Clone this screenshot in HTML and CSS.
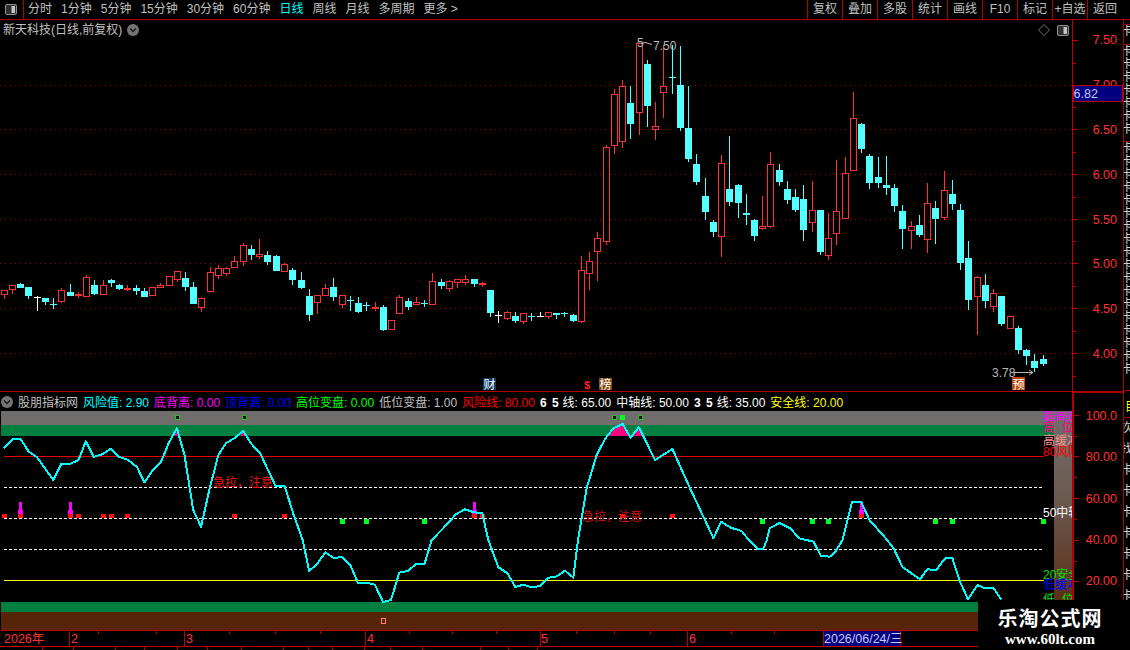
FILE: index.html
```html
<!DOCTYPE html>
<html lang="zh-CN">
<head>
<meta charset="utf-8">
<title>新天科技 日线</title>
<link rel="stylesheet" href="styles.css">
</head>
<body>
<div class="page">
  <header class="toolbar">
    <div class="toggle-box">
      <svg class="toggle" viewBox="0 0 12 11"><rect x=".5" y=".5" width="11" height="10" rx="1.5" class="toggle-frame"/><rect x="6.5" y="2" width="3.5" height="7" class="toggle-fill"/></svg>
    </div>
    <nav class="periods">
      <span>分时</span><span>1分钟</span><span>5分钟</span><span>15分钟</span><span>30分钟</span><span>60分钟</span><span class="active">日线</span><span>周线</span><span>月线</span><span>多周期</span><span>更多&nbsp;&gt;</span>
    </nav>
    <nav class="tools">
      <span>复权</span><span>叠加</span><span>多股</span><span>统计</span><span>画线</span><span>F10</span><span>标记</span><span>+自选</span><span>返回</span>
    </nav>
  </header>

  <div class="body-row">
    <div class="charts">
      <section class="price-row">
        <div class="price-chart">
          <svg id="price" class="chart-svg" width="1072" height="371" viewBox="0 20 1072 371">
            <path class="grid" d="M0 85.5H1072M0 129.5H1072M0 174.5H1072M0 219.5H1072M0 263.5H1072M0 308.5H1072M0 353.5H1072"/>
            <g id="candles"></g>
            <text x="653" y="50" class="note">7.50</text>
            <text x="637" y="47" class="note">5</text>
            <path class="note-line" d="M641 43.5l4-1 7 2"/>
            <text x="992" y="377" class="note">3.78</text>
            <path class="note-line" d="M1014 372.500H1033M1029 370l4 2.500-4 2.500"/>
            <rect x="483" y="378" width="13" height="12" class="tag-cai"/><text x="483.500" y="389" class="tag-text">财</text>
            <text x="584" y="389" class="tag-s">$</text>
            <rect x="599" y="378" width="13" height="12" class="tag-bang"/><text x="599.500" y="389" class="tag-text">榜</text>
            <rect x="1012" y="377" width="13" height="13" class="tag-yu"/><text x="1012.500" y="388.500" class="tag-text">预</text>
          </svg>
          <div class="stock-title">新天科技(日线,前复权)
            <svg class="circle-btn" viewBox="0 0 12 12"><circle cx="6" cy="6" r="6" class="circle-fill"/><path class="circle-chevron" d="M3 4.500l3 3 3-3"/></svg>
          </div>
          <div class="corner-tools">
            <svg class="diamond" viewBox="0 0 12 12"><path d="M6 .5L11.500 6 6 11.500.5 6z"/></svg>
            <svg class="toggle" viewBox="0 0 12 11"><rect x=".5" y=".5" width="11" height="10" rx="1.5" class="toggle-frame"/><rect x="6.500" y="2" width="3.500" height="7" class="toggle-fill"/></svg>
          </div>
        </div>
      </section>

      <section class="indicator">
        <div class="legend">
          <svg class="circle-btn" viewBox="0 0 12 12"><circle cx="6" cy="6" r="6" class="circle-fill"/><path class="circle-chevron" d="M3 4.500l3 3 3-3"/></svg>
          <span class="c-grey">股朋指标网</span>
          <span class="c-cyan">风险值: 2.90</span>
          <span class="c-magenta">底背离: 0.00</span>
          <span class="c-blue">顶背离: 0.00</span>
          <span class="c-green">高位变盘: 0.00</span>
          <span class="c-grey">低位变盘: 1.00</span>
          <span class="c-red">风险线: 80.00</span>
          <span class="c-white"><b>6 5</b>线: 65.00</span>
          <span class="c-white">中轴线: 50.00</span>
          <span class="c-white"><b>3 5</b>线: 35.00</span>
          <span class="c-yellow">安全线: 20.00</span>
        </div>
        <svg id="indicator" class="chart-svg" width="1072" height="219" viewBox="0 411 1072 219">
          <defs>
            <linearGradient id="fade" x1="0" y1="0" x2="0" y2="1"><stop offset="0" stop-color="#706e6c"/><stop offset=".45" stop-color="#6c5a50"/><stop offset="1" stop-color="#5c3018"/></linearGradient>
          </defs>
          <rect x="1" y="411" width="1053" height="14" class="band-grey"/>
          <rect x="1" y="425" width="1053" height="11" class="band-green"/>
          <rect x="1" y="602" width="1053" height="10" class="band-green"/>
          <rect x="1" y="612" width="1053" height="18" class="band-brown"/>
          <rect x="1054" y="411" width="18" height="189" fill="url(#fade)"/>
          <rect x="4" y="456" width="1040" height="1" class="l-red"/>
          <path class="l-dash" d="M4 487.500H1044M4 518.500H1044M4 549.500H1044"/>
          <rect x="4" y="580" width="1040" height="1" class="l-yellow"/>
          <g id="marks"></g>
          <text x="213" y="487" class="warn">急拉，注意</text>
          <text x="582" y="521" class="warn dim">急拉，注意</text>
          <g id="curve"></g>
          <rect x="381.500" y="618.500" width="4" height="5" class="mini-square"/>
          <text x="1043" y="420" class="side s-magenta">超高抛</text>
          <text x="1043" y="432" class="side s-pink">高&nbsp;&nbsp;位</text>
          <text x="1043" y="445" class="side s-salmon">高缓冲</text>
          <text x="1043" y="456" class="side s-red">80风险</text>
          <text x="1043" y="517" class="side s-white">50中轴</text>
          <text x="1043" y="579" class="side s-green">20安全</text>
          <text x="1043" y="589" class="side s-blue">低缓冲</text>
          <text x="1043" y="604" class="side s-green">低&nbsp;&nbsp;位</text>
        </svg>
      </section>
    </div>

    <aside class="axis">
      <svg class="axis-price" width="51" height="371" viewBox="1072 20 51 371">
        <path class="axis-tick" d="M1073 40.500h5M1073 63.500h3M1073 107.500h3M1073 129.500h5M1073 152.500h3M1073 174.500h5M1073 197.500h3M1073 219.500h5M1073 241.500h3M1073 263.500h5M1073 286.500h3M1073 308.500h5M1073 331.500h3M1073 353.500h5M1073 376.500h3"/>
        <text x="1117" y="44" class="axis-label">7.50</text>
        <text x="1117" y="89" class="axis-label">7.00</text>
        <text x="1117" y="134" class="axis-label">6.50</text>
        <text x="1117" y="179" class="axis-label">6.00</text>
        <text x="1117" y="224" class="axis-label">5.50</text>
        <text x="1117" y="268" class="axis-label">5.00</text>
        <text x="1117" y="313" class="axis-label">4.50</text>
        <text x="1117" y="358" class="axis-label">4.00</text>
        <rect x="1073" y="85.500" width="49.500" height="16" class="price-tag"/>
        <text x="1073.500" y="98" class="price-text">6.82</text>
      </svg>
      <svg class="axis-ind" width="51" height="209" viewBox="1072 391 51 209">
        <path class="axis-frame" d="M1072 392H1123M1073 391V600"/>
        <path class="axis-tick" d="M1074 415.500h5M1074 436.500h3M1074 456.500h5M1074 477.500h3M1074 498.500h5M1074 519.500h3M1074 540.500h5M1074 561.500h3M1074 581.500h5"/>
        <text x="1117" y="420" class="axis-label">100.0</text>
        <text x="1117" y="461" class="axis-label">80.00</text>
        <text x="1117" y="503" class="axis-label">60.00</text>
        <text x="1117" y="544" class="axis-label">40.00</text>
        <text x="1117" y="585" class="axis-label">20.00</text>
      </svg>
    </aside>

    <aside class="strip">
      <div class="strip-sec s1"></div>
      <div class="strip-sec s2"><p>卡</p></div>
      <div class="strip-sec s3"><p>卡</p><p>卡</p><p>卡</p><p>卡</p><p>卡</p><p>卡</p><p>卡</p></div>
      <div class="strip-sec s3b"><p>卡</p><p>卡</p><p>卡</p><p>卡</p><p>卡</p><p>卡</p><p>卡</p><p>卡</p><p>卡</p><p>卡</p><p>卡</p><p>卡</p><p>卡</p><p>卡</p><p>卡</p><p>卡</p><p>卡</p><p>卡</p></div>
      <div class="strip-sec s4"><p class="box">目</p></div>
      <div class="strip-sec s5"><p>次</p><p>找</p><p>卡</p><p>卡</p><p>卡</p><p>卡</p><p>卡</p><p>卡</p><p>卡</p><p>卡</p></div>
    </aside>
  </div>

  <footer class="date-row">
    <svg width="1130" height="20" viewBox="0 630 1130 20">
      <path class="date-line" d="M0 630.500H1130M0 646.500H1130M69.500 630V646M184.500 630V646M365.500 630V646M540.500 630V646M687.500 630V646"/>
      <path class="date-line" d="M98.500 631v3M156.500 631v3M229.500 631v3M275.500 631v3M320.500 631v3M409.500 631v3M452.500 631v3M496.500 631v3M576.500 631v3M614.500 631v3M650.500 631v3M731.500 631v3M774.500 631v3"/>
      <path class="date-line" d="M42.500 646v4M73.500 646v4M115.500 646v4M144.500 646v4M177.500 646v4M207.500 646v4M241.500 646v4M283.500 646v4M308.500 646v4M332.500 646v4M364.500 646v4M390.500 646v4M422.500 646v4M480.500 646v4M508.500 646v4M537.500 646v4"/>
      <text x="4" y="643" class="date-label">2026年</text>
      <text x="71" y="643" class="date-label">2</text>
      <text x="186" y="643" class="date-label">3</text>
      <text x="367" y="643" class="date-label">4</text>
      <text x="541" y="643" class="date-label">5</text>
      <text x="689" y="643" class="date-label">6</text>
      <rect x="823" y="630.500" width="77.500" height="15.500" class="date-tag"/>
      <text x="824" y="643" class="date-text">2026/06/24/三</text>
    </svg>
  </footer>

  <div class="watermark">
    <div class="wm-title">乐淘公式网</div>
    <div class="wm-url">www.60lt.com</div>
  </div>
</div>
<script src="chart.js"></script>
</body>
</html>
```

FILE: styles.css
```css
* { box-sizing: border-box; }
html, body { margin: 0; padding: 0; background: #000; }
body { width: 1130px; height: 650px; overflow: hidden; font-family: "Liberation Sans", "Noto Sans CJK SC", sans-serif; font-size: 12px; color: #c0c0c0; }
svg { display: block; }
text { font-family: "Liberation Sans", "Noto Sans CJK SC", sans-serif; font-size: 12px; }
.page { position: relative; width: 1130px; height: 650px; display: flex; flex-direction: column; background: #000; }

.toolbar { display: flex; height: 20px; flex: none; border-bottom: 1px solid #b00000; line-height: 18px; }
.toggle-box { width: 24px; display: flex; align-items: center; justify-content: center; border-right: 1px solid #b00000; padding-right: 1px; }
.toggle { width: 12px; height: 11px; flex: none; }
.toggle-frame { fill: #303030; stroke: #909090; }
.toggle-fill { fill: #c4c4c4; }
.periods { display: flex; gap: 9px; padding-left: 4px; flex: 1; }
.periods span { white-space: nowrap; }
.periods .active { color: #00ffff; }
.tools { display: flex; width: 323px; }
.tools span { width: 35px; border-left: 1px solid #b00000; text-align: center; white-space: nowrap; }
.tools span:last-child { width: 43px; padding-right: 8px; }

.body-row { display: flex; height: 610px; flex: none; }
.charts { width: 1072px; flex: none; display: flex; flex-direction: column; }
.price-row { height: 372px; flex: none; border-bottom: 1px solid #b00000; }
.price-chart { position: relative; height: 371px; }
.chart-svg { shape-rendering: crispEdges; flex: none; }
.chart-svg text { shape-rendering: auto; }
.stock-title { position: absolute; left: 3px; top: 1px; display: flex; align-items: center; gap: 5px; line-height: 18px; white-space: nowrap; }
.circle-btn { width: 12px; height: 12px; flex: none; }
.circle-fill { fill: #757575; }
.circle-chevron { fill: none; stroke: #1c1c1c; stroke-width: 1.5; }
.corner-tools { position: absolute; right: 3px; top: 4px; display: flex; align-items: center; gap: 7px; }
.diamond { width: 12px; height: 12px; }
.diamond path { fill: none; stroke: #707070; }

.grid { stroke: #a00000; stroke-dasharray: 1 4; fill: none; }
.note { fill: #b8b8b8; }
.note-line { stroke: #b8b8b8; fill: none; shape-rendering: auto; }
.tag-text { fill: #fff; font-size: 12px; }
.tag-cai { fill: #103a66; }
.tag-bang { fill: #8a4a10; }
.tag-yu { fill: #b84a10; }
.tag-s { fill: #ff2020; font-weight: 700; font-size: 11px; }

.indicator { display: flex; flex-direction: column; }
.legend { height: 19px; flex: none; display: flex; align-items: center; gap: 5px; padding-left: 1px; white-space: nowrap; }
.legend b { font-weight: 700; letter-spacing: 1px; margin-right: 3px; }
.c-grey { color: #c0c0c0; }
.c-cyan { color: #00ffff; }
.c-magenta { color: #ff00ff; }
.c-blue { color: #0000ff; }
.c-green { color: #00ff00; }
.c-red { color: #ff0000; }
.c-white { color: #fff; }
.c-yellow { color: #ffff00; }

.band-grey { fill: #706e6c; }
.band-green { fill: #008040; }
.band-brown { fill: #582408; }
.mini-square { fill: #582408; stroke: #ff8080; }
.l-red { fill: #e80000; }
.l-dash { stroke: #fff; stroke-dasharray: 3 2; fill: none; }
.l-yellow { fill: #ffff00; }
.warn { fill: #ff1010; font-size: 12px; }
.warn.dim { fill: #d01010; }
.side { font-size: 12px; }
.s-magenta { fill: #ff00ff; }
.s-pink { fill: #ff0080; }
.s-salmon { fill: #ff9090; }
.s-red { fill: #ff0000; }
.s-white { fill: #fff; }
.s-green { fill: #00e000; }
.s-blue { fill: #0000ff; }
.curve { fill: none; stroke: #00ffff; stroke-width: 2; shape-rendering: crispEdges; stroke-linejoin: round; }
.peak { fill: #ff0080; shape-rendering: auto; }

.axis { width: 51px; flex: none; border-left: 1px solid #c00000; display: flex; flex-direction: column; }
.axis-price { margin-left: -1px; flex: none; }
.axis-ind { margin-left: -1px; flex: none; }
.axis-frame { stroke: #b00000; stroke-width: 2; fill: none; shape-rendering: crispEdges; }
.axis-tick { stroke: #c00000; fill: none; shape-rendering: crispEdges; }
.axis-label { fill: #ff3232; text-anchor: end; font-size: 12.5px; }
.price-tag { fill: #000080; stroke: #c00000; shape-rendering: crispEdges; }
.price-text { fill: #c8c8ff; font-size: 12.5px; }

.strip { width: 7px; flex: none; border-left: 1px solid #b00000; overflow: hidden; display: flex; flex-direction: column; color: #d0d0d0; }
.strip-sec { overflow: hidden; border-bottom: 1px solid #b00000; padding-left: 1px; flex: none; }
.strip-sec p { margin: 0 0 0 -4px; line-height: 13px; white-space: nowrap; }
.s1 { height: 5px; }
.s2 { height: 20px; }
.s3 { height: 97px; }
.s3b { height: 249px; }
.s4 { height: 27px; }
.s4 .box { color: #ffff00; padding-top: 10px; margin-left: 0; }
.s5 { height: 212px; border-bottom: 0; }
.s5 p { line-height: 21px; }

.date-row { height: 20px; flex: none; }
.date-line { stroke: #c00000; fill: none; shape-rendering: crispEdges; }
.date-label { fill: #ff3232; font-size: 12.5px; }
.date-tag { fill: #000080; stroke: #c00000; shape-rendering: crispEdges; }
.date-text { fill: #c8c8ff; font-size: 12.5px; }

.watermark { position: absolute; left: 978px; top: 600px; width: 152px; height: 50px; background: #000; color: #fff; display: flex; flex-direction: column; align-items: center; padding: 6px 8px 0 0; }
.wm-title { font-size: 20px; font-weight: 700; line-height: 26px; letter-spacing: 1px; white-space: nowrap; }
.wm-url { font-family: "Liberation Serif", serif; font-size: 15px; font-weight: 700; line-height: 15px; white-space: nowrap; }
```

FILE: chart.js
```js
var NS = "http://www.w3.org/2000/svg";
function el(parent, name, attrs) {
  var n = document.createElementNS(NS, name);
  for (var k in attrs) n.setAttribute(k, attrs[k]);
  parent.appendChild(n);
  return n;
}
// candle readings: [x, high, top, bottom, low, kind]  r hollow red, R solid red, c cyan, w white
var groups = [
  { x0: 0, y0: 230, rows: [
    [13,181,181,194,207,"r"],[37,166,166,179,191,"r"],[61,159,163,174,174,"c"],[85,171,171,198,207,"c"],
    [112,198,201,203,243,"w"],[136,204,204,216,225,"c"],[160,204,222,224,237,"c"],[184,175,181,215,218,"r"],
    [211,162,186,198,198,"c"],[235,186,193,197,204,"R"],[259,135,142,200,200,"r"],[283,150,165,192,195,"c"],
    [310,150,166,194,194,"r"],[334,147,150,159,171,"c"],[358,162,165,177,180,"c"],[382,165,174,179,183,"R"],
    [409,165,174,183,195,"c"],[433,174,183,201,201,"c"],[457,172,172,197,197,"r"],[481,159,166,173,173,"r"],
    [508,139,139,167,167,"r"],[532,124,124,149,156,"r"],[556,126,144,171,183,"c"],[580,156,171,222,222,"c"],
    [604,202,205,233,246,"r"],[631,111,127,185,185,"r"],[655,105,115,137,147,"r"],[679,111,115,131,138,"r"],
    [703,78,94,113,113,"r"],[730,39,46,95,108,"r"],[754,45,57,75,90,"c"],[778,27,73,82,87,"r"],
    [802,63,75,96,105,"c"],[829,75,78,123,123,"c"],[853,99,103,125,125,"r"],[877,114,120,150,165,"c"],
    [903,126,150,174,177,"c"]
  ]},
  { x0: 300, y0: 230, rows: [
    [28,177,198,255,273,"c"],[52,196,196,218,252,"r"],[76,162,175,197,197,"r"],[100,144,171,201,213,"c"],
    [127,196,196,224,234,"r"],[151,198,210,212,243,"c"],[175,201,220,246,249,"c"],[198,216,225,227,243,"c"],
    [226,216,232,236,243,"R"],[250,225,231,300,303,"c"],[274,271,271,299,299,"r"],[298,195,202,251,251,"r"],
    [325,204,213,231,240,"c"],[349,201,217,224,224,"r"],[373,210,219,221,231,"c"],[397,129,154,224,224,"r"],
    [424,147,156,168,177,"c"],[448,150,154,177,186,"r"],[472,148,148,158,174,"r"],[496,135,148,158,165,"r"],
    [523,147,147,162,171,"c"],[547,155,159,164,171,"R"],[571,180,180,249,261,"c"],[595,243,255,257,279,"w"],
    [622,243,247,266,270,"r"],[646,246,258,273,279,"c"],[670,250,250,275,282,"r"],[694,249,257,259,273,"c"],
    [720,246,258,260,261,"w"],[745,247,247,260,267,"r"],[769,250,250,255,267,"c"],[793,246,249,252,261,"c"],
    [820,252,255,273,276,"c"],[844,78,121,275,279,"r"],[868,66,94,131,180,"r"],[892,6,25,65,153,"r"]
  ]},
  { x0: 600, y0: 40, rows: [
    [19,316,322,605,615,"r"],[43,147,163,317,342,"r"],[67,120,139,305,324,"r"],[91,138,189,252,297,"c"],
    [118,10,10,218,285,"r"],[142,60,72,198,261,"c"],[166,186,259,269,300,"r"],[190,15,139,158,234,"r"],
    [217,15,111,113,162,"c"],[241,18,135,264,273,"c"],[265,138,264,357,366,"c"],[289,342,372,426,435,"c"],
    [316,414,468,516,540,"c"],[340,540,546,576,591,"c"],[364,345,370,590,651,"r"],[388,288,447,486,498,"c"],
    [415,432,435,489,534,"c"],[439,462,519,524,555,"c"],[463,537,540,588,603,"c"],[487,468,559,566,570,"r"],
    [511,336,373,560,564,"r"],[538,372,390,426,438,"c"],[562,423,447,480,492,"c"],[586,447,471,510,516,"c"],
    [610,435,477,570,603,"c"],[637,423,511,548,576,"r"],[661,510,510,636,645,"c"],[685,519,595,647,660,"r"],
    [709,360,514,581,615,"r"]
  ]},
  { x0: 830, y0: 90, rows: [
    [46,201,250,388,388,"r"],[70,6,85,244,244,"r"],[94,99,102,177,189,"c"],[118,192,198,279,297,"c"],
    [145,201,261,279,294,"c"],[169,198,285,294,315,"c"],[193,282,294,348,366,"c"],[217,345,363,417,477,"c"],
    [244,393,409,422,477,"r"],[268,375,405,435,441,"c"],[292,279,340,449,489,"r"],[316,333,354,387,462,"c"],
    [343,243,301,384,390,"r"],[367,270,312,342,360,"c"],[391,342,360,519,540,"c"],[415,453,504,630,660,"c"],
    [442,558,562,620,735,"r"],[466,552,585,633,654,"c"],[490,597,610,651,666,"r"],[514,618,618,702,708,"c"],
    [541,679,679,717,717,"r"],[565,708,714,780,792,"c"],[589,777,780,798,825,"c"],[613,792,813,834,846,"c"],
    [640,795,807,822,828,"c"]
  ]}
];
var colors = { r: "#ff3232", R: "#ff3232", c: "#54ffff", w: "#ffffff" };
var candleLayer = document.getElementById("candles");
groups.forEach(function (g) {
  g.rows.forEach(function (c) {
    var x = Math.floor(g.x0 + c[0] / 3);
    var y = function (v) { return Math.round(g.y0 + v / 3); };
    var hi = y(c[1]), top = y(c[2]), bot = y(c[3]), lo = y(c[4]), col = colors[c[5]];
    el(candleLayer, "rect", { x: x, y: hi, width: 1, height: Math.max(lo - hi, 1), fill: col });
    if (c[5] === "r") {
      el(candleLayer, "rect", { x: x - 3 + 0.5, y: top + 0.5, width: 6, height: Math.max(bot - top - 1, 1), fill: "#000", stroke: col });
    } else {
      el(candleLayer, "rect", { x: x - 3, y: top, width: 7, height: Math.max(bot - top, 1), fill: col });
    }
  });
});

// indicator curve, read per section of the chart
var sections = [
  [0, 375, [11,220,35,192,57,192,80,230,103,247,148,315,170,266,196,266,218,255,238,199,260,246,283,238,308,221,331,246,354,254,380,276,401,322,424,285,447,260,468,205,491,160,512,240,536,405,558,455,582,340,606,240,627,205,650,190,675,168,698,207,722,235,765,334,790,334,815,420,840,495]],
  [0, 540, [858,93,880,72,903,37,925,53,950,52,972,75,993,128,1018,128,1040,134,1063,186,1085,180,1108,98,1133,92,1155,71,1178,71,1198,0]],
  [0, 375, [1230,460,1265,418,1290,403,1315,412,1338,414,1355,495]],
  [0, 540, [1383,82,1408,100,1430,141,1452,134,1473,141,1498,139,1520,114,1545,109,1568,92]],
  [565, 540, [23,113,36,0]],
  [565, 375, [60,340,88,240,112,190,135,160,160,147,182,188,205,157,250,255,298,222,345,335,412,490,433,440,460,458,490,468,510,495]],
  [565, 540, [535,27,550,27,560,0]],
  [565, 375, [568,460,595,444,625,460,650,490]],
  [565, 540, [690,5,710,47,735,50,750,35,770,0]],
  [565, 375, [797,380,822,381,845,435,890,490]],
  [565, 540, [912,25,937,82,985,118,1005,88,1030,90,1055,55,1075,55,1095,122,1118,178,1145,135,1165,145,1190,145,1210,178]]
];
var pts = [];
sections.forEach(function (s) {
  for (var i = 0; i < s[2].length; i += 2) {
    pts.push((s[0] + s[2][i] / 2.775).toFixed(1) + "," + (s[1] + s[2][i + 1] / 3).toFixed(1));
  }
});
var curveLayer = document.getElementById("curve");
function zx(v, x0) { return ((x0 || 0) + v / 2.775).toFixed(1); }
function zy(v) { return (375 + v / 3).toFixed(1); }
[[0,[483,183,491,165,497,183]],[0,[668,183,675,170,682,183]],[565,[118,183,135,160,160,147,178,183]],[565,[190,183,205,157,218,183]]].forEach(function (p) {
  var s = [];
  for (var i = 0; i < p[1].length; i += 2) s.push(zx(p[1][i], p[0]) + "," + zy(p[1][i + 1]));
  el(curveLayer, "polygon", { points: s.join(" "), "class": "peak" });
});
el(curveLayer, "polyline", { points: pts.join(" "), "class": "curve" });

// small markers
var marks = document.getElementById("marks");
function square(x, y, w, h, fill) { el(marks, "rect", { x: Math.round(x - w / 2), y: y, width: w, height: h, fill: fill }); }
[[0,[12,57,196,218,287,309,354,651,789,1317,1338]],[565,[160,298,822]]].forEach(function (g) {
  g[1].forEach(function (v) { square(+zx(v, g[0]), 514, 5, 4, "#ff1010"); });
});
[[0,[950,1017,1178]],[565,[548,687,731,1028,1075,1328]]].forEach(function (g) {
  g[1].forEach(function (v) { square(+zx(v, g[0]), 519, 5, 5, "#00ff20"); });
});
[[0,57],[0,196],[0,1317],[565,822]].forEach(function (b) {
  var x = +zx(b[1], b[0]);
  square(x, 502, 3, 9, "#ff00ff");
  square(x, 510, 5, 4, "#ff00ff");
});
[[0,492],[0,676],[565,137],[565,207]].forEach(function (b) {
  var x = Math.round(+zx(b[1], b[0]));
  el(marks, "rect", { x: x - 2 + 0.5, y: 415.5, width: 4, height: 4, fill: "#111", stroke: "#20c020" });
});
square(+zx(160, 565), 415, 5, 5, "#00ff20");
```
